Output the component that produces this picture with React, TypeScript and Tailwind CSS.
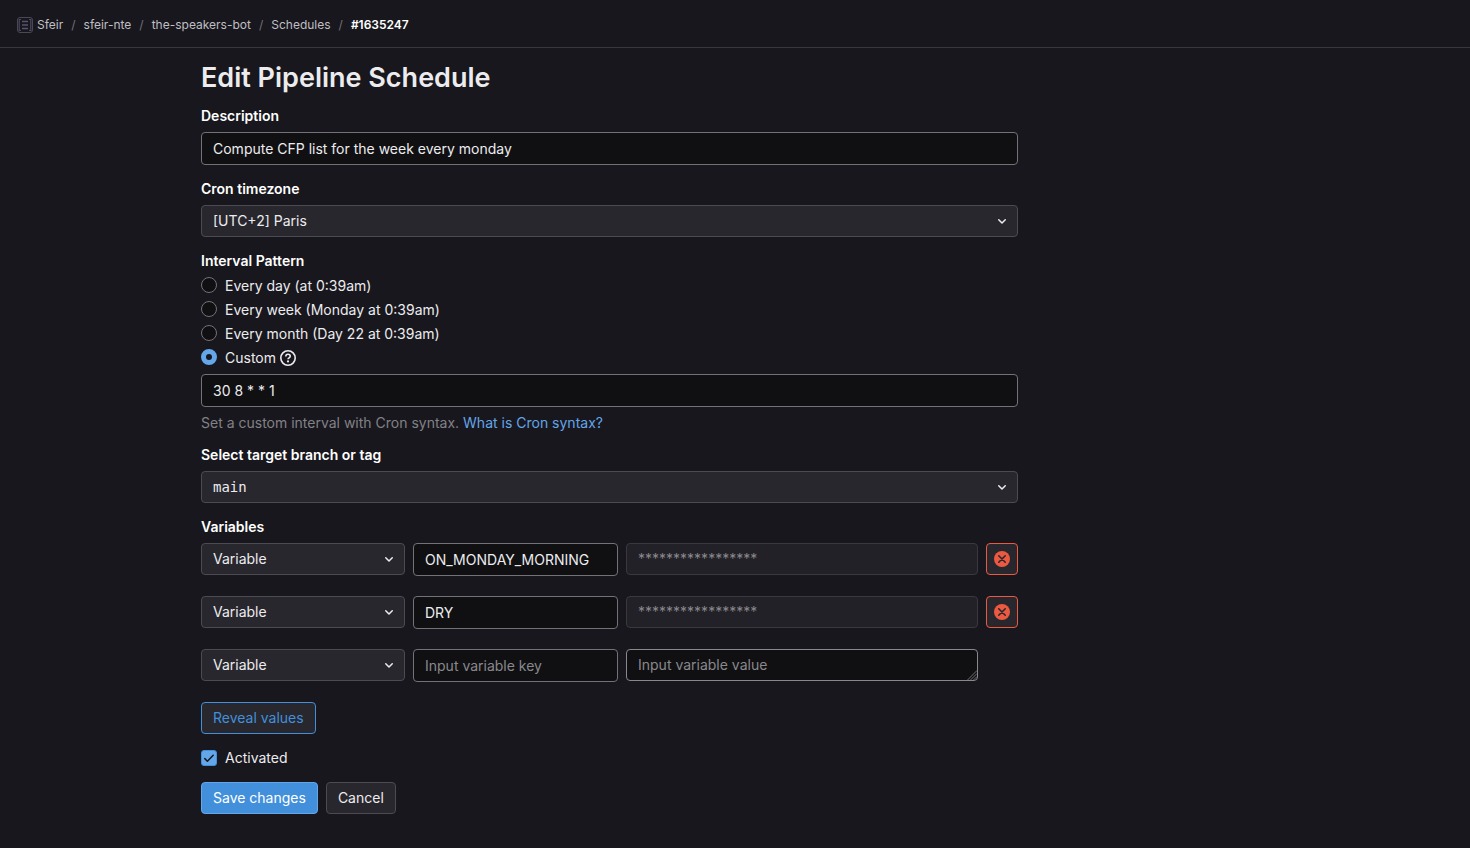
import { useState } from "react";
import type { ReactNode } from "react";

const inputClass =
  "block h-[33px] w-full rounded border border-[#737278] bg-[#101012] px-[11px] text-sm text-[#ececef] placeholder:text-[#89888d]";
const selectClass =
  "block h-8 w-full appearance-none rounded border border-[#4c4b51] bg-[#28272d] pl-[11px] pr-8 text-[#ececef]";
const labelClass = "mb-2 block text-sm leading-4 font-semibold text-white";

const crumbs = ["sfeir-nte", "the-speakers-bot", "Schedules"];

const intervals = [
  "Every day (at 0:39am)",
  "Every week (Monday at 0:39am)",
  "Every month (Day 22 at 0:39am)",
];

const variables = ["ON_MONDAY_MORNING", "DRY", ""];

function Chevron() {
  return (
    <svg
      viewBox="0 0 16 16"
      className="pointer-events-none absolute top-2 right-2 size-4"
      fill="none"
      stroke="#ececef"
      strokeWidth="1.5"
      strokeLinecap="round"
      strokeLinejoin="round"
      aria-hidden="true"
    >
      <path d="M4.75 6.75 8 10l3.25-3.25" />
    </svg>
  );
}

function ProjectLogo() {
  return (
    <svg viewBox="0 0 16 16" className="size-4" fill="none" aria-hidden="true">
      <rect x="0.5" y="0.5" width="15" height="15" rx="2.5" stroke="#4a4953" />
      <path d="M4 2.500H2.200v11H4M12 2.500h1.800v11H12" stroke="#4d4965" strokeWidth="1.200" />
      <path d="M5 4.500h6M5 8h6M5 11.500h6" stroke="#56536f" strokeWidth="1.300" />
    </svg>
  );
}

function HelpIcon() {
  return (
    <svg viewBox="0 0 16 16" className="size-4" fill="none" stroke="#ececef" strokeWidth="1.6" aria-hidden="true">
      <circle cx="8" cy="8" r="7.2" />
      <path d="M5.800 6.500C5.800 5.100 6.800 4.250 8 4.250s2.200.8 2.200 2c0 1.600-2.200 1.500-2.200 3.100" />
      <circle cx="8" cy="11.400" r="1.100" fill="#ececef" stroke="none" />
    </svg>
  );
}

function ClearIcon() {
  return (
    <svg viewBox="0 0 16 16" className="size-4" aria-hidden="true">
      <circle cx="8" cy="8" r="8" fill="#ec5941" />
      <path d="m4.750 4.750 6.500 6.500m0-6.500-6.500 6.500" stroke="#28272d" strokeWidth="1.600" strokeLinecap="round" />
    </svg>
  );
}

function ResizeGrip() {
  return (
    <svg
      viewBox="0 0 10 10"
      className="pointer-events-none absolute right-px bottom-px size-2.5"
      fill="none"
      stroke="#89888d"
      strokeWidth="0.8"
      aria-hidden="true"
    >
      <path d="M0.500 10 10 0.500M3.500 10 10 3.500M6.500 10 10 6.500" />
    </svg>
  );
}

function Radio({ id, checked, onChange, children }: { id: string; checked: boolean; onChange: () => void; children: ReactNode }) {
  return (
    <div className="flex h-6 gap-2 pt-1">
      <input
        id={id}
        type="radio"
        name="interval"
        checked={checked}
        onChange={onChange}
        className="size-4 shrink-0 appearance-none rounded-full border border-[#737278] bg-[#101012] checked:border-[5px] checked:border-[#63a6e9] checked:bg-[#18171d]"
      />
      <label htmlFor={id} className="text-sm leading-[18px]">
        {children}
      </label>
    </div>
  );
}

function VariableRow({ name, index }: { name: string; index: number }) {
  const [key, setKey] = useState(name);
  const saved = name !== "";
  return (
    <div className="grid items-start gap-2 sm:grid-cols-[204px_205px_minmax(0,1fr)_32px]">
      <div className="relative">
        <select aria-label={`Type ${index + 1}`} className={`${selectClass} text-sm`}>
          <option>Variable</option>
          <option>File</option>
        </select>
        <Chevron />
      </div>
      <input
        aria-label={`Key ${index + 1}`}
        className={inputClass}
        value={key}
        placeholder="Input variable key"
        onChange={(e) => setKey(e.target.value)}
      />
      {saved ? (
        <textarea
          aria-label={`Value ${index + 1}`}
          disabled
          className="block h-8 w-full resize-none overflow-hidden rounded border border-[#3a383f] bg-[#222127] px-[11px] py-[7px] text-sm leading-4 text-[#89888d]"
          value="*****************"
        />
      ) : (
        <div className="relative">
          <textarea
            aria-label={`Value ${index + 1}`}
            className="block h-8 w-full resize-none overflow-hidden rounded border border-[#89888d] bg-[#101012] px-[11px] py-[7px] text-sm leading-4 text-[#ececef] placeholder:text-[#89888d]"
            placeholder="Input variable value"
          />
          <ResizeGrip />
        </div>
      )}
      {saved && (
        <button
          type="button"
          aria-label="Remove variable"
          className="flex size-8 items-center justify-center rounded border border-[#ec5941] bg-[#28272d]"
        >
          <ClearIcon />
        </button>
      )}
    </div>
  );
}

export default function App() {
  const [description, setDescription] = useState("Compute CFP list for the week every monday");
  const [cron, setCron] = useState("30 8 * * 1");
  const [interval, setIntervalChoice] = useState(3);
  const [active, setActive] = useState(true);

  return (
    <div className="min-h-screen bg-[#18171d] font-['Inter',sans-serif] text-sm text-[#ececef]">
      <header className="flex h-12 items-center border-b border-[#38373d] px-4">
        <nav aria-label="Breadcrumbs">
          <ol className="flex items-center gap-2 pt-0.5 text-xs leading-4 text-[#bfbfc3]">
            <li>
              <a href="#sfeir" className="flex items-center gap-1 pl-px">
                <ProjectLogo />
                Sfeir
              </a>
            </li>
            {crumbs.map((crumb) => (
              <li key={crumb} className="flex gap-2">
                <span className="text-[#737278]">/</span>
                <a href={`#${crumb}`}>{crumb}</a>
              </li>
            ))}
            <li className="flex gap-2">
              <span className="text-[#737278]">/</span>
              <a href="#1635247" aria-current="page" className="font-semibold text-white">
                #1635247
              </a>
            </li>
          </ol>
        </nav>
      </header>

      <main className="mx-auto max-w-[1100px] px-4 py-4">
        <h1 className="mb-4 text-[27px] leading-7 font-semibold">Edit Pipeline Schedule</h1>

        <form className="flex max-w-[817px] flex-col gap-4" onSubmit={(e) => e.preventDefault()}>
          <div>
            <label htmlFor="description" className={labelClass}>
              Description
            </label>
            <input
              id="description"
              className={inputClass}
              value={description}
              onChange={(e) => setDescription(e.target.value)}
            />
          </div>

          <div>
            <label htmlFor="timezone" className={labelClass}>
              Cron timezone
            </label>
            <div className="relative">
              <select id="timezone" className={`${selectClass} text-sm`}>
                <option>[UTC+2] Paris</option>
              </select>
              <Chevron />
            </div>
          </div>

          <fieldset>
            <legend className="mb-1 text-sm leading-4 font-semibold text-white">Interval Pattern</legend>
            {intervals.map((text, i) => (
              <Radio key={text} id={`interval-${i}`} checked={interval === i} onChange={() => setIntervalChoice(i)}>
                {text}
              </Radio>
            ))}
            <div className="flex gap-1">
              <Radio id="interval-3" checked={interval === 3} onChange={() => setIntervalChoice(3)}>
                Custom
              </Radio>
              <a href="#help" aria-label="Scheduled pipelines help" className="pt-[5px]">
                <HelpIcon />
              </a>
            </div>
            <input
              aria-label="Custom interval"
              className={`${inputClass} mt-[5px]`}
              value={cron}
              onChange={(e) => setCron(e.target.value)}
            />
            <p className="mt-2 text-sm leading-4 text-[#828187]">
              Set a custom interval with Cron syntax.{" "}
              <a href="#cron" className="text-[#63a6e9]">
                What is Cron syntax?
              </a>
            </p>
          </fieldset>

          <div>
            <label htmlFor="branch" className={labelClass}>
              Select target branch or tag
            </label>
            <div className="relative">
              <select id="branch" className={`${selectClass} font-['DejaVu_Sans_Mono',monospace] text-sm`}>
                <option>main</option>
              </select>
              <Chevron />
            </div>
          </div>

          <fieldset>
            <legend className={labelClass}>Variables</legend>
            <div className="flex flex-col items-stretch gap-5">
              {variables.map((name, i) => (
                <VariableRow key={i} name={name} index={i} />
              ))}
              <button
                type="button"
                className="h-8 self-start rounded border border-[#428fdc] bg-[#28272d] px-[11px] text-sm text-[#428fdc]"
              >
                Reveal values
              </button>
            </div>
          </fieldset>

          <div className="flex items-center gap-2">
            <span className="relative flex size-4">
              <input
                id="activated"
                type="checkbox"
                checked={active}
                onChange={(e) => setActive(e.target.checked)}
                className="size-4 appearance-none rounded-[3px] border border-[#737278] bg-[#101012] checked:border-[#428fdc] checked:bg-[#63a6e9]"
              />
              {active && (
                <svg
                  viewBox="0 0 16 16"
                  className="pointer-events-none absolute inset-0 size-4"
                  fill="none"
                  stroke="#18171d"
                  strokeWidth="1.5"
                  strokeLinecap="round"
                  strokeLinejoin="round"
                  aria-hidden="true"
                >
                  <path d="m3.800 8.600 2.600 2.600 5.800-6" />
                </svg>
              )}
            </span>
            <label htmlFor="activated" className="text-sm leading-4">
              Activated
            </label>
          </div>

          <div className="flex gap-2">
            <button
              type="submit"
              className="h-8 rounded border border-[#63a6e9] bg-[#428fdc] px-[11px] text-sm text-white"
            >
              Save changes
            </button>
            <button
              type="button"
              className="h-8 rounded border border-[#4c4b51] bg-[#28272d] px-[11px] text-sm text-[#ececef]"
            >
              Cancel
            </button>
          </div>
        </form>
      </main>
    </div>
  );
}
